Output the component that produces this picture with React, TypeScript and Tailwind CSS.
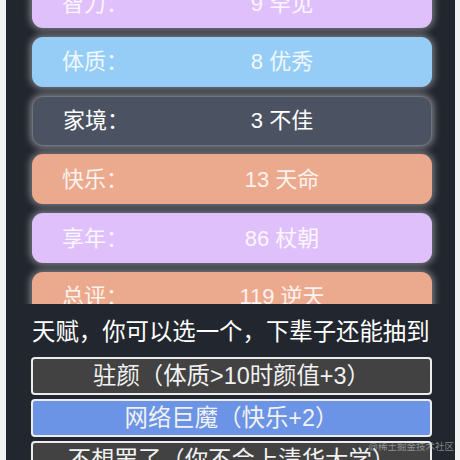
import React from "react";

type Stat = {
  label: string;
  value: string;
  tone: "purple" | "blue" | "dark" | "salmon";
};

const stats: Stat[] = [
  { label: "智力：", value: "9 罕见", tone: "purple" },
  { label: "体质：", value: "8 优秀", tone: "blue" },
  { label: "家境：", value: "3 不佳", tone: "dark" },
  { label: "快乐：", value: "13 天命", tone: "salmon" },
  { label: "享年：", value: "86 杖朝", tone: "purple" },
  { label: "总评：", value: "119 逆天", tone: "salmon" },
];

const toneClass: Record<Stat["tone"], string> = {
  purple: "bg-[#e0c0fb] text-white/85",
  blue: "bg-[#96cdf6] text-white/85",
  dark: "bg-[#4b5261] text-white border-[1.5px] border-[#6e737c]",
  salmon: "bg-[#eba98d] text-white/85",
};

const talents = [
  { text: "驻颜（体质>10时颜值+3）", selected: false },
  { text: "网络巨魔（快乐+2）", selected: true },
  { text: "不想罢了（你不会上清华大学）", selected: false },
];

function StatCard({ stat }: { stat: Stat }) {
  return (
    <div
      className={`flex h-[50px] w-[400px] shrink-0 items-center rounded-[11px] px-[30px] text-[22px] shadow-[0_0_7px_2px_rgba(200,200,205,0.55)] ${toneClass[stat.tone]}`}
    >
      <span className="w-[100px]">{stat.label}</span>
      <span className="flex-1 text-center">{stat.value}</span>
    </div>
  );
}

export default function App() {
  return (
    <div
      className="relative h-[460px] w-[460px] overflow-hidden bg-[#f1f3f1]"
      style={{ fontFamily: '"Liberation Sans", "Noto Sans CJK SC", sans-serif' }}
    >
      <div className="ml-[6px] mr-[5px] flex h-full flex-col bg-[#22262e]">
        {/* Stats list, scrolled */}
        <div className="h-[304px] shrink-0 overflow-hidden">
          <div className="mt-[-22px] ml-[26px] flex flex-col gap-[8.8px]">
            {stats.map((s) => (
              <StatCard key={s.label} stat={s} />
            ))}
          </div>
        </div>

        {/* Talent picker */}
        <div className="flex flex-1 flex-col pt-[14px]">
          <p className="ml-[26px] text-[23.4px] leading-[28px] text-white">
            天赋，你可以选一个，下辈子还能抽到
          </p>
          <div className="ml-[25px] mt-[11px] flex w-[401px] flex-col gap-[4px]">
            {talents.map((t) => (
              <button
                key={t.text}
                className={`h-[38px] shrink-0 whitespace-nowrap rounded-[4px] border-2 border-[#ececec] text-center text-[23.4px] leading-[34px] text-[#f2f2f2] ${
                  t.selected ? "bg-[#6b94e7]" : "bg-[#424242]"
                }`}
              >
                {t.text}
              </button>
            ))}
          </div>
        </div>
      </div>

      <span className="absolute right-[6px] top-[440px] text-[9.5px] text-[#c8c8c8]/60">
        @稀土掘金技术社区
      </span>
    </div>
  );
}
